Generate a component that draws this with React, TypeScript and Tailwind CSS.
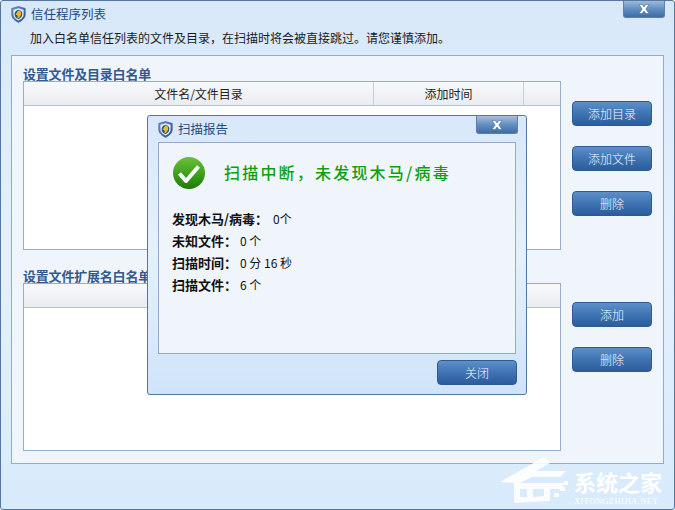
import React from "react";

const cjk = "font-['Noto_Sans_CJK_SC','Liberation_Sans',sans-serif]";

function Shield({ id, className = "" }: { id: string; className?: string }) {
  return (
    <svg viewBox="0 0 16 18" className={className}>
      <defs>
        <linearGradient id={id} x1="0" y1="0" x2="1" y2="1">
          <stop offset="0" stopColor="#6f9bd0" />
          <stop offset="1" stopColor="#1f4d8c" />
        </linearGradient>
      </defs>
      <path d="M8 .5 L15.200 2.500 V9 C15.200 13 11.500 15.800 8 17.500 C4.500 15.800 .8 13 .8 9 V2.500 Z" fill={`url(#${id})`} stroke="#2f4f78" strokeWidth="0.6" />
      <path d="M8 2.300 L13.400 3.900 V9 C13.400 12 10.500 14.300 8 15.500 C5.500 14.300 2.600 12 2.600 9 V3.900 Z" fill="#e6edf4" />
      <path d="M8 3.800 C4.800 4.300 3.600 7 3.900 9.500 C4.300 11.800 6 13.300 8 14 C11 12.800 12.200 10.500 12 8 C11.800 5.500 10 4 8 3.800 Z" fill="#24508c" />
      <path d="M8.800 4.200 C11 5.800 11.400 8.500 10 10.500 C9 12 7.800 12.900 6.600 13.300 C7.200 11.600 7.400 10.600 6.600 9.900 C6 9.400 5.500 9.800 5 9.500 C5.600 7.500 7 5.500 8.800 4.200 Z" fill="#f0bb1e" />
    </svg>
  );
}

function CloseX({ className = "" }: { className?: string }) {
  return (
    <div className={`absolute flex h-[18px] w-[42px] items-center justify-center rounded-b-[3px] border border-t-0 border-[#5f7fa8] bg-gradient-to-b from-[#a8c0dc] via-[#6490c2] to-[#3f6ca3] ${className}`}>
      <svg viewBox="0 0 12 10" className="h-[10px] w-[12px]">
        <path d="M1 .5 H4.200 L6 3 L7.800 .5 H11 L7.800 5 L11 9.500 H7.800 L6 7 L4.200 9.500 H1 L4.200 5 Z" fill="#ffffff" stroke="#3c5f8c" strokeWidth="0.5" />
      </svg>
    </div>
  );
}

function Btn({ children, className = "" }: { children: React.ReactNode; className?: string }) {
  return (
    <button className={`flex h-[25px] w-[80px] items-center justify-center rounded-[4px] border border-[#2e5a90] bg-gradient-to-b from-[#5d90c9] via-[#3f74b3] to-[#2c5c9b] text-[12px] font-light leading-none text-[#f4f8fc] ${className}`}>
      {children}
    </button>
  );
}

function ListBox({ title, className, header }: { title: string; className: string; header: React.ReactNode }) {
  return (
    <div className={`flex flex-col ${className}`}>
      <h3 className="h-[14px] text-[13px] font-bold leading-[13px] tracking-[-0.200px] text-[#33598f]">{title}</h3>
      <div className="flex flex-1 flex-col border border-[#97aec8] bg-white">
        <div className="flex h-[24px] border-b border-[#b4c2d3] bg-gradient-to-b from-[#f8f9fb] to-[#e9ecf1] text-[12px] leading-[23px] text-[#222]">
          {header}
        </div>
      </div>
    </div>
  );
}

export default function App() {
  return (
    <div className={`relative h-[510px] w-[675px] overflow-hidden rounded-[3px] border border-[#53779f] bg-gradient-to-b from-[#d8e8f9] via-[#e4f1fd] to-[#d8eafb] ${cjk}`}>
      <CloseX className="right-[9px] top-[-1px]" />

      <div className="flex h-[27px] items-center gap-[5px] pl-[10px] text-[12.500px] text-[#234a7c]">
        <Shield id="s1" className="h-[17px] w-[15px]" />
        <span>信任程序列表</span>
      </div>
      <p className="ml-[29px] h-[27px] text-[12px] leading-[20px] text-[#1a1a1a]">
        加入白名单信任列表的文件及目录，在扫描时将会被直接跳过。请您谨慎添加。
      </p>

      <div className="ml-[10px] flex h-[409px] w-[653px] border border-[#93abc6] bg-[#f0f5fc]">
        <div className="flex w-[549px] flex-col pl-[11px] pt-[11px]">
          <ListBox
            title="设置文件及目录白名单"
            className="h-[183px] w-[538px]"
            header={
              <>
                <span className="w-[350px] border-r border-[#c9cfd8] text-center">文件名/文件目录</span>
                <span className="w-[150px] border-r border-[#c9cfd8] text-center">添加时间</span>
              </>
            }
          />
          <ListBox title="设置文件扩展名白名单" className="mt-[19px] h-[182px] w-[538px]" header={null} />
        </div>
        <div className="flex flex-col pl-[11px] pt-[45px]">
          <div className="flex flex-col gap-[20px]">
            <Btn>添加目录</Btn>
            <Btn>添加文件</Btn>
            <Btn>删除</Btn>
          </div>
          <div className="mt-[86px] flex flex-col gap-[20px]">
            <Btn>添加</Btn>
            <Btn>删除</Btn>
          </div>
        </div>
      </div>

      {/* dialog */}
      <div className="absolute left-[146px] top-[114px] flex h-[280px] w-[380px] flex-col rounded-[3px] border border-[#53779f] bg-gradient-to-b from-[#d8e8f9] via-[#e4f1fd] to-[#cfe4f9]">
        <CloseX className="right-[8px] top-0" />
        <div className="flex h-[26px] items-center gap-[5px] pl-[10px] text-[12.500px] text-[#234a7c]">
          <Shield id="s2" className="h-[17px] w-[15px]" />
          <span>扫描报告</span>
        </div>
        <div className="ml-[10px] flex h-[212px] w-[358px] flex-col border border-[#93abc6] bg-[#f0f5fc] pl-[13px] pt-[14px]">
          <div className="flex items-center gap-[19px]">
            <svg viewBox="0 0 32 32" className="ml-[1px] h-[32px] w-[32px]">
              <defs>
                <linearGradient id="gr" x1="0" y1="0" x2="0" y2="1">
                  <stop offset="0" stopColor="#6cc03a" />
                  <stop offset="0.55" stopColor="#3c9e1c" />
                  <stop offset="1" stopColor="#1c7a0a" />
                </linearGradient>
              </defs>
              <circle cx="16" cy="16" r="16" fill="url(#gr)" />
              <path d="M6.500 16.500 L13 24 L25.500 9.500" fill="none" stroke="#fff" strokeWidth="4" strokeLinejoin="round" />
            </svg>
            <span className="mt-[-2px] text-[16px] font-medium leading-none tracking-[2.200px] text-[#0da00d]">
              扫描中断，未发现木马/病毒
            </span>
          </div>
          <dl className="mt-[22px] flex flex-col gap-[6px] text-[12px] leading-[16px] text-[#111]">
            <div className="flex">
              <dt className="text-[13px] font-bold">发现木马/病毒：</dt>
              <dd className="ml-[5px]">0个</dd>
            </div>
            <div className="flex">
              <dt className="text-[13px] font-bold">未知文件：</dt>
              <dd className="ml-[3px]">0 个</dd>
            </div>
            <div className="flex">
              <dt className="text-[13px] font-bold">扫描时间：</dt>
              <dd className="ml-[3px]">0 分 16 秒</dd>
            </div>
            <div className="flex">
              <dt className="text-[13px] font-bold">扫描文件：</dt>
              <dd className="ml-[3px]">6 个</dd>
            </div>
          </dl>
        </div>
        <div className="flex justify-end pr-[9px] pt-[6px]">
          <Btn>关闭</Btn>
        </div>
      </div>

      {/* watermark */}
      <div className="pointer-events-none absolute bottom-[2px] left-[499px] flex items-end text-white">
        <svg viewBox="0 0 72 50" className="h-[50px] w-[72px] opacity-90">
          <path d="M0 25 L44 0 L50 6 L36 14 L66 14 L60 20 L32 20 L20 26 L66 26 L60 32 L50 32 L50 44 L14 46 L14 26 Z M20 32 V40 L27 40 V32 Z M33 32 V40 L44 39 V32 Z" fill="#fff" fillRule="evenodd" />
          <path d="M54 36 h5 v4 h-5z M60 30 h5 v4 h-5z M64 24 h4 v4 h-4z" fill="#fff" />
        </svg>
        <div className="ml-[2px] flex flex-col items-start">
          <span className="text-[22px] font-bold leading-[26px]">系统之家</span>
          <span className="mb-[1px] mt-[3px] font-['Liberation_Serif',serif] text-[8.500px] leading-[9px] tracking-[0.400px]">XITONGZHIJIA.NET</span>
        </div>
      </div>
    </div>
  );
}
